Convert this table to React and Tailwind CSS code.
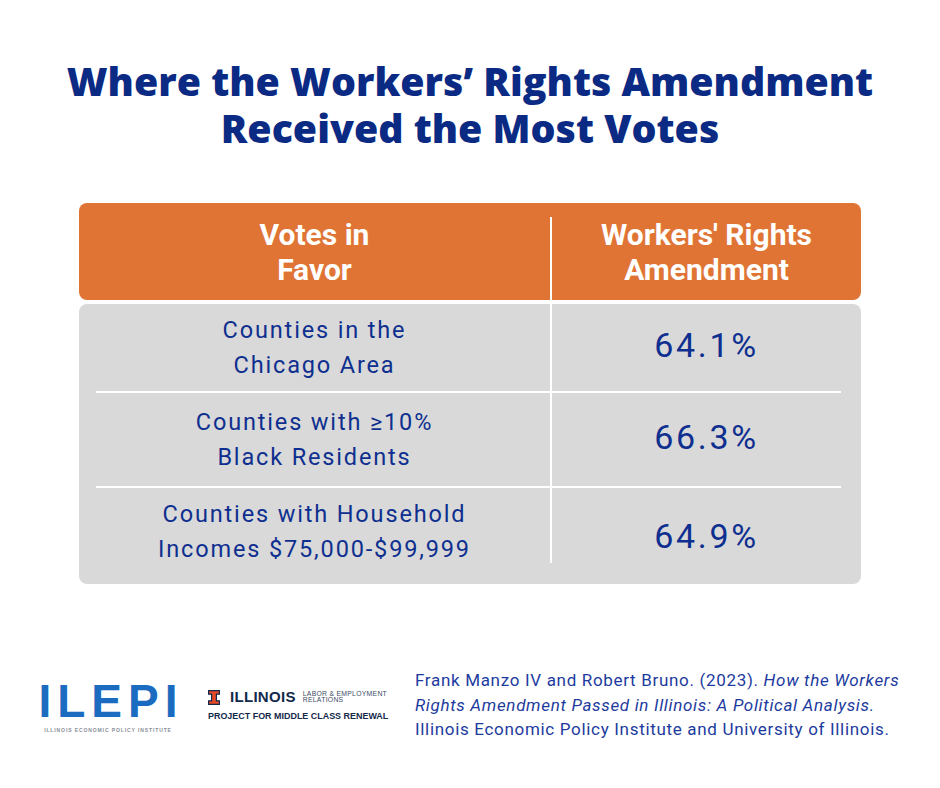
import React from 'react';

const rows = [
  { label: ['Counties in the', 'Chicago Area'], value: '64.1%' },
  { label: ['Counties with ≥10%', 'Black Residents'], value: '66.3%' },
  { label: ['Counties with Household', 'Incomes $75,000-$99,999'], value: '64.9%' },
];

const IllinoisBlockI = () => (
  <svg width="12" height="15" viewBox="0 0 12 15">
    <path
      d="M0.6 0.6h10.8v3.6h-3v6.6h3v3.6H0.6v-3.6h3V4.2h-3z"
      fill="#e84a27"
      stroke="#13294b"
      strokeWidth="1.2"
    />
  </svg>
);

const App = () => {
  return (
    <div className="w-[940px] h-[788px] bg-white flex flex-col overflow-hidden">
      {/* Title */}
      <h1 className="pt-[58px] text-center text-[39.3px] leading-[47px] font-extrabold text-[#0b2a84] font-['Open_Sans',sans-serif]">
        <div>Where the Workers’ Rights Amendment</div>
        <div>Received the Most Votes</div>
      </h1>

      {/* Table */}
      <div className="mt-[51px] ml-[79px] w-[782px] font-['Roboto',sans-serif]">
        <div className="h-[97px] bg-[#e07434] rounded-[8px] grid grid-cols-[471px_1fr] text-white font-bold text-[30px] leading-[35px]">
          <div className="flex items-center justify-center text-center">
            <div>
              Votes in
              <br />
              Favor
            </div>
          </div>
          <div className="mt-[14px] border-l-2 border-white flex items-center justify-center text-center pb-[14px]">
            <div>
              Workers' Rights
              <br />
              Amendment
            </div>
          </div>
        </div>

        <div className="mt-[4px] h-[280px] bg-[#d9d9d9] rounded-[8px] text-[#0e2f8f]">
          {rows.map((row, i) => (
            <div key={i}>
              <div
                className={
                  'grid grid-cols-[471px_1fr] ' +
                  (i === 0 ? 'h-[87px]' : i === 1 ? 'h-[93px]' : 'h-[92px]')
                }
              >
                <div
                  className={
                    'flex justify-center items-center text-center text-[23.5px] leading-[35px] tracking-[1.85px] ' +
                    (i === 2 ? 'pb-[4px]' : '')
                  }
                >
                  <div>
                    {row.label[0]}
                    <br />
                    {row.label[1]}
                  </div>
                </div>
                <div
                  className={
                    'border-l-2 border-white flex justify-center text-[34px] leading-[40px] tracking-[2.7px] ' +
                    (i === 2 ? 'h-[75px] pt-[28px]' : 'items-center pb-[6px]')
                  }
                >
                  {row.value}
                </div>
              </div>
              {i < 2 && <div className="ml-[17px] mr-[20px] h-[2px] bg-white" />}
            </div>
          ))}
        </div>
      </div>

      {/* Footer */}
      <div className="mt-[79px] flex items-start">
        <div className="ml-[40px] mt-[18px] w-[136px] flex flex-col items-center">
          <div className="text-[46px] leading-[40px] font-bold tracking-[6px] mr-[-6px] text-[#1b6cc0] font-['Liberation_Sans',sans-serif]">
            ILEPI
          </div>
          <div className="mt-[6px] text-[5px] leading-[6px] tracking-[0.9px] font-bold text-[#8a8f99] whitespace-nowrap font-['Liberation_Sans',sans-serif]">
            ILLINOIS ECONOMIC POLICY INSTITUTE
          </div>
        </div>

        <div className="ml-[32px] mt-[26px] w-[190px] flex flex-col font-['Liberation_Sans',sans-serif]">
          <div className="flex items-center">
            <IllinoisBlockI />
            <span className="ml-[10px] text-[15px] leading-[16px] font-bold tracking-[0.3px] text-[#13294b]">
              ILLINOIS
            </span>
            <div className="ml-[7px] text-[6.8px] leading-[6.5px] text-[#3b4a66] tracking-[0.3px]">
              LABOR &amp; EMPLOYMENT
              <br />
              RELATIONS
            </div>
          </div>
          <div className="mt-[6px] text-[8.95px] leading-[11px] font-bold text-[#13294b] whitespace-nowrap">
            PROJECT FOR MIDDLE CLASS RENEWAL
          </div>
        </div>

        <div className="ml-[17px] mt-[5px] text-[17px] leading-[24.5px] text-[#1d3b9e] tracking-[0.68px] font-['Roboto',sans-serif] whitespace-nowrap">
          Frank Manzo IV and Robert Bruno. (2023). <i>How the Workers</i>
          <br />
          <i>Rights Amendment Passed in Illinois: A Political Analysis.</i>
          <br />
          Illinois Economic Policy Institute and University of Illinois.
        </div>
      </div>
    </div>
  );
};

export default App;
